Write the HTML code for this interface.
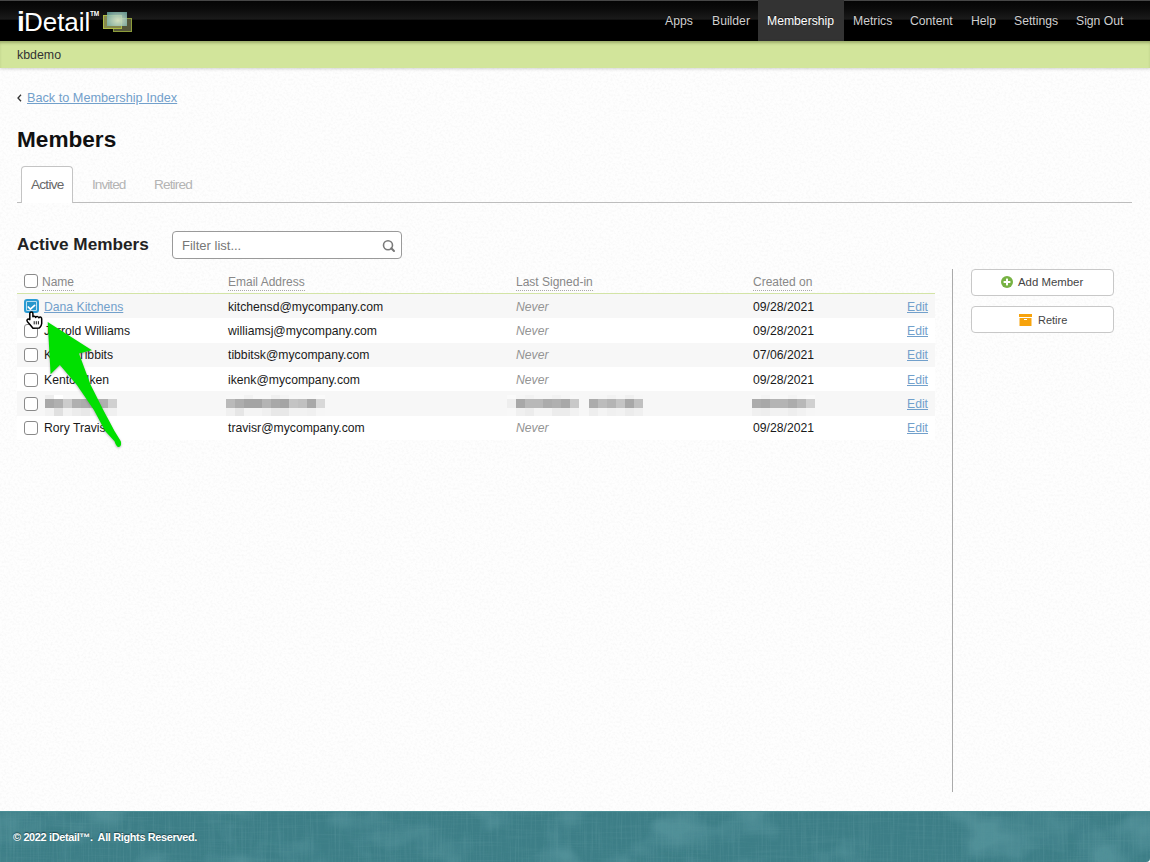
<!DOCTYPE html>
<html><head><meta charset="utf-8">
<style>
*{margin:0;padding:0;box-sizing:border-box}
html,body{width:1150px;height:862px;overflow:hidden}
html{background:#d8d8d8}
body{position:relative;background:#fefefe;font-family:"Liberation Sans",sans-serif;color:#222}
.a{position:absolute;white-space:pre;line-height:1}
#nav{position:absolute;left:0;top:0;width:1150px;height:41px;background:linear-gradient(#474747 0,#474747 1px,#050505 1px,#0b0b0b 9px,#1a1a1a 19px,#000 20.5px,#000 41px)}
#nav .it{position:absolute;top:14px;font-size:12.2px;color:#cfcfcf;text-shadow:0 -1px 0 rgba(0,0,0,.5)}
#nav .act{position:absolute;left:758px;top:0;width:86px;height:41px;background:#333}
#green{position:absolute;left:0;top:41px;width:1150px;height:27px;background:#d2e59b;box-shadow:0 1px 3px rgba(0,0,0,.18),inset 0 3px 3px -1px rgba(50,60,10,.33)}
.link,.c.link{color:#72a0cb;text-decoration:underline}
.hd{color:#888;font-size:12px;border-bottom:1px dotted #aaa;padding-bottom:1.6px}
.row{position:absolute;left:17px;width:918px}
.cb{position:absolute;left:24px;width:14px;height:14px;border:1px solid #8a8a8a;border-radius:3px;background:#fff}
.c{position:absolute;font-size:12.2px;color:#1a1a1a;white-space:pre;line-height:1}
.nv{font-style:italic;color:#949494}
.chk{background:#2596cc;border:2px solid #2a9bd3;box-shadow:inset 0 0 0 0.8px #e8f4fa}
.blur i{position:absolute;width:9px;display:block}
.btn{position:absolute;left:971px;width:143px;height:27px;border:1px solid #c8c8c8;border-radius:4px;background:#fff}
#foot{position:absolute;left:0;top:811px;width:1150px;height:51px;overflow:hidden;border-bottom-right-radius:4px;background:#3d7e87;border-top:1px solid #4b8e96}
</style></head><body>
<svg style="position:absolute;left:0;top:68px" width="1150" height="743"><filter id="bgn" x="0" y="0" width="100%" height="100%"><feTurbulence type="fractalNoise" baseFrequency="0.45" numOctaves="2" seed="7"/><feColorMatrix type="matrix" values="0 0 0 0 0.5  0 0 0 0 0.5  0 0 0 0 0.5  -0.22 0 0 0 0.13"/></filter><rect width="1150" height="743" filter="url(#bgn)"/></svg>
<div id="nav">
  <div class="act"></div>
  <div class="a" style="left:17px;top:8px;font-size:28px;color:#fff;font-weight:bold">i</div>
  <div class="a" style="left:24px;top:9px;font-size:26px;color:#fff;letter-spacing:-0.05px">Detail</div>
  <div class="a" style="left:90px;top:11px;font-size:6.5px;color:#fff;font-weight:bold;letter-spacing:-0.2px">TM</div>
  <div style="position:absolute;left:0;top:0;width:140px;height:41px;filter:blur(0.45px)">
  <div style="position:absolute;left:113px;top:18px;width:19px;height:14px;background:#55563a;border:1px solid #8c9c3a"></div>
  <div style="position:absolute;left:103px;top:15px;width:19px;height:14px;background:#85894e;border:1px solid #aebc44"></div>
  <div style="position:absolute;left:107px;top:12px;width:20px;height:14px;background:radial-gradient(ellipse at 55% 60%,rgba(215,228,195,.95) 0,rgba(170,205,190,.85) 45%,rgba(95,165,160,.8) 100%)"></div>
  </div>
  <div class="it" style="left:665px">Apps</div>
  <div class="it" style="left:712px">Builder</div>
  <div class="it" style="left:767px;color:#fff">Membership</div>
  <div class="it" style="left:853px">Metrics</div>
  <div class="it" style="left:910px">Content</div>
  <div class="it" style="left:971px">Help</div>
  <div class="it" style="left:1014px">Settings</div>
  <div class="it" style="left:1076px">Sign Out</div>
</div>
<div id="green"><div class="a" style="left:17px;top:8px;font-size:12.4px;color:#333">kbdemo</div></div>

<svg style="position:absolute;left:16px;top:93px" width="8" height="10" viewBox="0 0 8 10"><path d="M5,1.8 L2,5 L5,8.2" fill="none" stroke="#333" stroke-width="1.3"/></svg>
<div class="a link" style="left:27px;top:92px;font-size:12.7px">Back to Membership Index</div>
<div class="a" style="left:17px;top:129px;font-size:22.6px;font-weight:bold;color:#111">Members</div>

<!-- tabs -->
<div style="position:absolute;left:17px;top:202px;width:1115px;height:1px;background:#bdbdbd"></div>
<div style="position:absolute;left:21px;top:166px;width:52px;height:37px;border:1px solid #c4c4c4;border-bottom:none;border-radius:4px 4px 0 0;background:#fff"></div>
<div class="a" style="left:31px;top:178px;font-size:13.6px;color:#686868;letter-spacing:-0.75px">Active</div>
<div class="a" style="left:92px;top:178px;font-size:13.6px;color:#b4b4b4;letter-spacing:-0.95px">Invited</div>
<div class="a" style="left:154px;top:178px;font-size:13.6px;color:#b4b4b4;letter-spacing:-0.85px">Retired</div>

<div class="a" style="left:17px;top:236px;font-size:17.2px;font-weight:bold;color:#222">Active Members</div>
<div style="position:absolute;left:172px;top:231px;width:230px;height:28px;border:1px solid #9a9a9a;border-radius:4px;background:#fff"></div>
<div class="a" style="left:182px;top:239px;font-size:13px;color:#777">Filter list...</div>
<svg style="position:absolute;left:381px;top:238px" width="16" height="16" viewBox="0 0 16 16"><circle cx="7" cy="7.2" r="4.5" fill="none" stroke="#7a7a7a" stroke-width="1.6"/><line x1="10.3" y1="10.3" x2="13" y2="13" stroke="#777" stroke-width="2" stroke-linecap="round"/></svg>

<!-- table -->
<div class="cb" style="top:274px"></div>
<div class="a hd" style="left:42px;top:276px">Name</div>
<div class="a hd" style="left:228px;top:276px">Email Address</div>
<div class="a hd" style="left:516px;top:276px">Last Signed-in</div>
<div class="a hd" style="left:753px;top:276px">Created on</div>
<div style="position:absolute;left:17px;top:293px;width:918px;height:1px;background:#d3e4a6"></div>

<div class="row" style="top:294px;height:24px;background:#f7f7f7"></div>
<div class="row" style="top:318px;height:25px;background:#fff"></div>
<div class="row" style="top:343px;height:24px;background:#f7f7f7"></div>
<div class="row" style="top:367px;height:24px;background:#fff"></div>
<div class="row" style="top:391px;height:25px;background:#f7f7f7"></div>
<div class="row" style="top:416px;height:24px;background:#fff"></div>

<div class="cb chk" style="top:299px;width:15px;height:14px"></div><svg style="position:absolute;left:24px;top:299px" width="15" height="14" viewBox="0 0 15 14"><path d="M4.3,8 L6.4,10.2 L10.6,6.3" fill="none" stroke="#fff" stroke-width="1.7" stroke-linecap="round" stroke-linejoin="round"/></svg>
<div class="c" style="left:44px;top:301px"><span class="link">Dana Kitchens</span></div>
<div class="c" style="left:228px;top:301px">kitchensd@mycompany.com</div>
<div class="c nv" style="left:516px;top:301px">Never</div>
<div class="c" style="left:753px;top:301px">09/28/2021</div>
<div class="c link" style="left:907px;top:301px">Edit</div>
<div class="cb" style="top:324px"></div>
<div class="c" style="left:44px;top:325px">Jarrold Williams</div>
<div class="c" style="left:228px;top:325px">williamsj@mycompany.com</div>
<div class="c nv" style="left:516px;top:325px">Never</div>
<div class="c" style="left:753px;top:325px">09/28/2021</div>
<div class="c link" style="left:907px;top:325px">Edit</div>
<div class="cb" style="top:348px"></div>
<div class="c" style="left:44px;top:349px">Kevin Tibbits</div>
<div class="c" style="left:228px;top:349px">tibbitsk@mycompany.com</div>
<div class="c nv" style="left:516px;top:349px">Never</div>
<div class="c" style="left:753px;top:349px">07/06/2021</div>
<div class="c link" style="left:907px;top:349px">Edit</div>
<div class="cb" style="top:373px"></div>
<div class="c" style="left:44px;top:374px">Kenton Iken</div>
<div class="c" style="left:228px;top:374px">ikenk@mycompany.com</div>
<div class="c nv" style="left:516px;top:374px">Never</div>
<div class="c" style="left:753px;top:374px">09/28/2021</div>
<div class="c link" style="left:907px;top:374px">Edit</div>
<div class="cb" style="top:397px"></div>
<div class="c link" style="left:907px;top:398px">Edit</div>
<div class="cb" style="top:421px"></div>
<div class="c" style="left:44px;top:422px">Rory Travis</div>
<div class="c" style="left:228px;top:422px">travisr@mycompany.com</div>
<div class="c nv" style="left:516px;top:422px">Never</div>
<div class="c" style="left:753px;top:422px">09/28/2021</div>
<div class="c link" style="left:907px;top:422px">Edit</div>
<div class="blur" style="position:absolute;left:0;top:0;filter:blur(0.4px)"><i style="left:45px;top:395px;height:4px;background:rgb(238,238,238)"></i><i style="left:45px;top:399px;height:9px;background:rgb(168,168,168)"></i><i style="left:45px;top:408px;height:8px;background:rgb(242,242,242)"></i><i style="left:54px;top:395px;height:4px;background:rgb(255,255,255)"></i><i style="left:54px;top:399px;height:9px;background:rgb(176,176,176)"></i><i style="left:54px;top:408px;height:8px;background:rgb(224,224,224)"></i><i style="left:63px;top:395px;height:4px;background:rgb(248,248,248)"></i><i style="left:63px;top:399px;height:9px;background:rgb(204,204,204)"></i><i style="left:63px;top:408px;height:8px;background:rgb(242,242,242)"></i><i style="left:72px;top:395px;height:4px;background:rgb(248,248,248)"></i><i style="left:72px;top:399px;height:9px;background:rgb(176,176,176)"></i><i style="left:72px;top:408px;height:8px;background:rgb(236,236,236)"></i><i style="left:81px;top:395px;height:4px;background:rgb(248,248,248)"></i><i style="left:81px;top:399px;height:9px;background:rgb(172,172,172)"></i><i style="left:81px;top:408px;height:8px;background:rgb(232,232,232)"></i><i style="left:90px;top:395px;height:4px;background:rgb(248,248,248)"></i><i style="left:90px;top:399px;height:9px;background:rgb(180,180,180)"></i><i style="left:90px;top:408px;height:8px;background:rgb(240,240,240)"></i><i style="left:99px;top:395px;height:4px;background:rgb(248,248,248)"></i><i style="left:99px;top:399px;height:9px;background:rgb(176,176,176)"></i><i style="left:99px;top:408px;height:8px;background:rgb(236,236,236)"></i><i style="left:108px;top:395px;height:4px;background:rgb(248,248,248)"></i><i style="left:108px;top:399px;height:9px;background:rgb(208,208,208)"></i><i style="left:108px;top:408px;height:8px;background:rgb(240,240,240)"></i><i style="left:226px;top:395px;height:4px;background:rgb(248,248,248)"></i><i style="left:226px;top:399px;height:9px;background:rgb(186,186,186)"></i><i style="left:226px;top:408px;height:8px;background:rgb(240,240,240)"></i><i style="left:235px;top:395px;height:4px;background:rgb(248,248,248)"></i><i style="left:235px;top:399px;height:9px;background:rgb(173,173,173)"></i><i style="left:235px;top:408px;height:8px;background:rgb(230,230,230)"></i><i style="left:244px;top:395px;height:4px;background:rgb(242,242,242)"></i><i style="left:244px;top:399px;height:9px;background:rgb(164,164,164)"></i><i style="left:244px;top:408px;height:8px;background:rgb(244,244,244)"></i><i style="left:253px;top:395px;height:4px;background:rgb(248,248,248)"></i><i style="left:253px;top:399px;height:9px;background:rgb(164,164,164)"></i><i style="left:253px;top:408px;height:8px;background:rgb(244,244,244)"></i><i style="left:262px;top:395px;height:4px;background:rgb(248,248,248)"></i><i style="left:262px;top:399px;height:9px;background:rgb(180,180,180)"></i><i style="left:262px;top:408px;height:8px;background:rgb(240,240,240)"></i><i style="left:271px;top:395px;height:4px;background:rgb(240,240,240)"></i><i style="left:271px;top:399px;height:9px;background:rgb(168,168,168)"></i><i style="left:271px;top:408px;height:8px;background:rgb(232,232,232)"></i><i style="left:280px;top:395px;height:4px;background:rgb(244,244,244)"></i><i style="left:280px;top:399px;height:9px;background:rgb(164,164,164)"></i><i style="left:280px;top:408px;height:8px;background:rgb(232,232,232)"></i><i style="left:289px;top:395px;height:4px;background:rgb(248,248,248)"></i><i style="left:289px;top:399px;height:9px;background:rgb(196,196,196)"></i><i style="left:289px;top:408px;height:8px;background:rgb(242,242,242)"></i><i style="left:298px;top:395px;height:4px;background:rgb(248,248,248)"></i><i style="left:298px;top:399px;height:9px;background:rgb(192,192,192)"></i><i style="left:298px;top:408px;height:8px;background:rgb(242,242,242)"></i><i style="left:307px;top:395px;height:4px;background:rgb(248,248,248)"></i><i style="left:307px;top:399px;height:9px;background:rgb(168,168,168)"></i><i style="left:307px;top:408px;height:8px;background:rgb(240,240,240)"></i><i style="left:316px;top:395px;height:4px;background:rgb(250,250,250)"></i><i style="left:316px;top:399px;height:9px;background:rgb(216,216,216)"></i><i style="left:316px;top:408px;height:8px;background:rgb(246,246,246)"></i><i style="left:507px;top:395px;height:4px;background:rgb(250,250,250)"></i><i style="left:507px;top:399px;height:9px;background:rgb(238,238,238)"></i><i style="left:507px;top:408px;height:8px;background:rgb(248,248,248)"></i><i style="left:516px;top:395px;height:4px;background:rgb(246,246,246)"></i><i style="left:516px;top:399px;height:9px;background:rgb(168,168,168)"></i><i style="left:516px;top:408px;height:8px;background:rgb(240,240,240)"></i><i style="left:525px;top:395px;height:4px;background:rgb(242,242,242)"></i><i style="left:525px;top:399px;height:9px;background:rgb(184,184,184)"></i><i style="left:525px;top:408px;height:8px;background:rgb(236,236,236)"></i><i style="left:534px;top:395px;height:4px;background:rgb(246,246,246)"></i><i style="left:534px;top:399px;height:9px;background:rgb(184,184,184)"></i><i style="left:534px;top:408px;height:8px;background:rgb(244,244,244)"></i><i style="left:543px;top:395px;height:4px;background:rgb(246,246,246)"></i><i style="left:543px;top:399px;height:9px;background:rgb(172,172,172)"></i><i style="left:543px;top:408px;height:8px;background:rgb(244,244,244)"></i><i style="left:552px;top:395px;height:4px;background:rgb(242,242,242)"></i><i style="left:552px;top:399px;height:9px;background:rgb(176,176,176)"></i><i style="left:552px;top:408px;height:8px;background:rgb(236,236,236)"></i><i style="left:561px;top:395px;height:4px;background:rgb(246,246,246)"></i><i style="left:561px;top:399px;height:9px;background:rgb(168,168,168)"></i><i style="left:561px;top:408px;height:8px;background:rgb(236,236,236)"></i><i style="left:570px;top:395px;height:4px;background:rgb(248,248,248)"></i><i style="left:570px;top:399px;height:9px;background:rgb(200,200,200)"></i><i style="left:570px;top:408px;height:8px;background:rgb(242,242,242)"></i><i style="left:589px;top:395px;height:4px;background:rgb(246,246,246)"></i><i style="left:589px;top:399px;height:9px;background:rgb(172,172,172)"></i><i style="left:589px;top:408px;height:8px;background:rgb(238,238,238)"></i><i style="left:598px;top:395px;height:4px;background:rgb(246,246,246)"></i><i style="left:598px;top:399px;height:9px;background:rgb(188,188,188)"></i><i style="left:598px;top:408px;height:8px;background:rgb(244,244,244)"></i><i style="left:607px;top:395px;height:4px;background:rgb(242,242,242)"></i><i style="left:607px;top:399px;height:9px;background:rgb(180,180,180)"></i><i style="left:607px;top:408px;height:8px;background:rgb(240,240,240)"></i><i style="left:616px;top:395px;height:4px;background:rgb(246,246,246)"></i><i style="left:616px;top:399px;height:9px;background:rgb(196,196,196)"></i><i style="left:616px;top:408px;height:8px;background:rgb(242,242,242)"></i><i style="left:625px;top:395px;height:4px;background:rgb(240,240,240)"></i><i style="left:625px;top:399px;height:9px;background:rgb(168,168,168)"></i><i style="left:625px;top:408px;height:8px;background:rgb(236,236,236)"></i><i style="left:634px;top:395px;height:4px;background:rgb(246,246,246)"></i><i style="left:634px;top:399px;height:9px;background:rgb(192,192,192)"></i><i style="left:634px;top:408px;height:8px;background:rgb(240,240,240)"></i><i style="left:752px;top:395px;height:4px;background:rgb(248,248,248)"></i><i style="left:752px;top:399px;height:9px;background:rgb(172,172,172)"></i><i style="left:752px;top:408px;height:8px;background:rgb(240,240,240)"></i><i style="left:761px;top:395px;height:4px;background:rgb(244,244,244)"></i><i style="left:761px;top:399px;height:9px;background:rgb(168,168,168)"></i><i style="left:761px;top:408px;height:8px;background:rgb(238,238,238)"></i><i style="left:770px;top:395px;height:4px;background:rgb(248,248,248)"></i><i style="left:770px;top:399px;height:9px;background:rgb(180,180,180)"></i><i style="left:770px;top:408px;height:8px;background:rgb(242,242,242)"></i><i style="left:779px;top:395px;height:4px;background:rgb(248,248,248)"></i><i style="left:779px;top:399px;height:9px;background:rgb(180,180,180)"></i><i style="left:779px;top:408px;height:8px;background:rgb(242,242,242)"></i><i style="left:788px;top:395px;height:4px;background:rgb(244,244,244)"></i><i style="left:788px;top:399px;height:9px;background:rgb(172,172,172)"></i><i style="left:788px;top:408px;height:8px;background:rgb(238,238,238)"></i><i style="left:797px;top:395px;height:4px;background:rgb(248,248,248)"></i><i style="left:797px;top:399px;height:9px;background:rgb(184,184,184)"></i><i style="left:797px;top:408px;height:8px;background:rgb(242,242,242)"></i><i style="left:806px;top:395px;height:4px;background:rgb(250,250,250)"></i><i style="left:806px;top:399px;height:9px;background:rgb(208,208,208)"></i><i style="left:806px;top:408px;height:8px;background:rgb(246,246,246)"></i></div>
<div class="vl" style="position:absolute;left:952px;top:269px;width:1px;height:523px;background:#aaa"></div>

<div class="btn" style="top:269px"></div>
<div class="btn" style="top:306px"></div>
<svg style="position:absolute;left:1001px;top:276px" width="12" height="12" viewBox="0 0 12 12"><circle cx="6" cy="6" r="6" fill="#77b243"/><rect x="2.6" y="5" width="6.8" height="2" fill="#fff"/><rect x="5" y="2.6" width="2" height="6.8" fill="#fff"/></svg>
<div class="a" style="left:1018px;top:277px;font-size:11.4px;color:#444">Add Member</div>
<svg style="position:absolute;left:1019px;top:314px" width="13" height="12" viewBox="0 0 13 12"><rect x="0" y="0" width="13" height="3" fill="#f7a30c"/><rect x="0.5" y="4" width="12" height="8" fill="#f7a30c"/><rect x="5" y="5" width="3" height="1" fill="#fff"/></svg>
<div class="a" style="left:1038px;top:315px;font-size:11px;color:#444">Retire</div>

<div id="foot"><svg style="position:absolute;left:0;top:0" width="1150" height="51"><defs>
<filter id="fv" x="0" y="0" width="100%" height="100%"><feTurbulence type="fractalNoise" baseFrequency="0.6 0.02" numOctaves="2" seed="4"/><feColorMatrix type="matrix" values="0 0 0 0 0.1  0 0 0 0 0.3  0 0 0 0 0.33  0 0 0 -2.2 1.25"/></filter>
<filter id="fh" x="0" y="0" width="100%" height="100%"><feTurbulence type="fractalNoise" baseFrequency="0.02 0.6" numOctaves="2" seed="9"/><feColorMatrix type="matrix" values="0 0 0 0 0.1  0 0 0 0 0.3  0 0 0 0 0.33  0 0 0 -2.2 1.2"/></filter>
<filter id="fb" x="0" y="0" width="100%" height="100%"><feTurbulence type="fractalNoise" baseFrequency="0.015 0.02" numOctaves="3" seed="5"/><feColorMatrix type="matrix" values="0 0 0 0 0.12  0 0 0 0 0.34  0 0 0 0 0.38  0 0 0 -4 2.1"/></filter>
</defs><rect width="1150" height="51" filter="url(#fb)" opacity="0.55"/><rect width="1150" height="51" filter="url(#fv)" opacity="0.45"/><rect width="1150" height="51" filter="url(#fh)" opacity="0.3"/></svg><div class="a" style="left:13px;top:20px;font-size:10.9px;font-weight:bold;color:#fff;letter-spacing:-0.33px;text-shadow:0 -1px 1px rgba(0,20,25,.55)">© 2022 iDetail™.  All Rights Reserved.</div></div>
<svg style="position:absolute;left:0;top:0;filter:drop-shadow(0 1px 1px rgba(60,40,60,.35))" width="1150" height="862"><path d="M47.7,321.9 L92,350.3 L79,353.6 Q85,370 90.7,385 L103.3,410 L114.5,431 L120.8,441.3 Q122,446 119,447 Q116.5,447.5 114.5,441.3 L105.1,431 L93.9,410 L76.9,385 L59.9,364.9 L50.6,374.3 Z" fill="#00e000"/></svg>
<svg style="position:absolute;left:25px;top:311px" width="19" height="20" viewBox="0 0 19 20"><path d="M4.8,8.6 L4.8,2.6 Q4.8,1.1 6.35,1.1 Q7.9,1.1 7.9,2.6 L7.9,5.8 Q8.6,5 9.4,5.3 Q10.3,5.5 10.6,6.4 Q11.5,5.3 12.6,5.6 Q13.6,5.9 13.9,6.8 Q14.9,5.8 15.8,6.2 Q16.7,6.7 16.7,8 L16.7,12.5 Q16.5,14.5 15,16.2 L14.2,17.1 L8,17.3 Q6,14.8 2.5,10.8 Q1.5,9.5 2.3,8.6 Q3.2,7.6 4.2,8.3 Z" fill="#fff" stroke="#000" stroke-width="1.5" stroke-linejoin="round"/><path d="M9.2,10.2 V13.4 M11.3,10.2 V13.4 M13.4,10.2 V13.4" stroke="#000" stroke-width="0.9"/></svg>
</body></html>
